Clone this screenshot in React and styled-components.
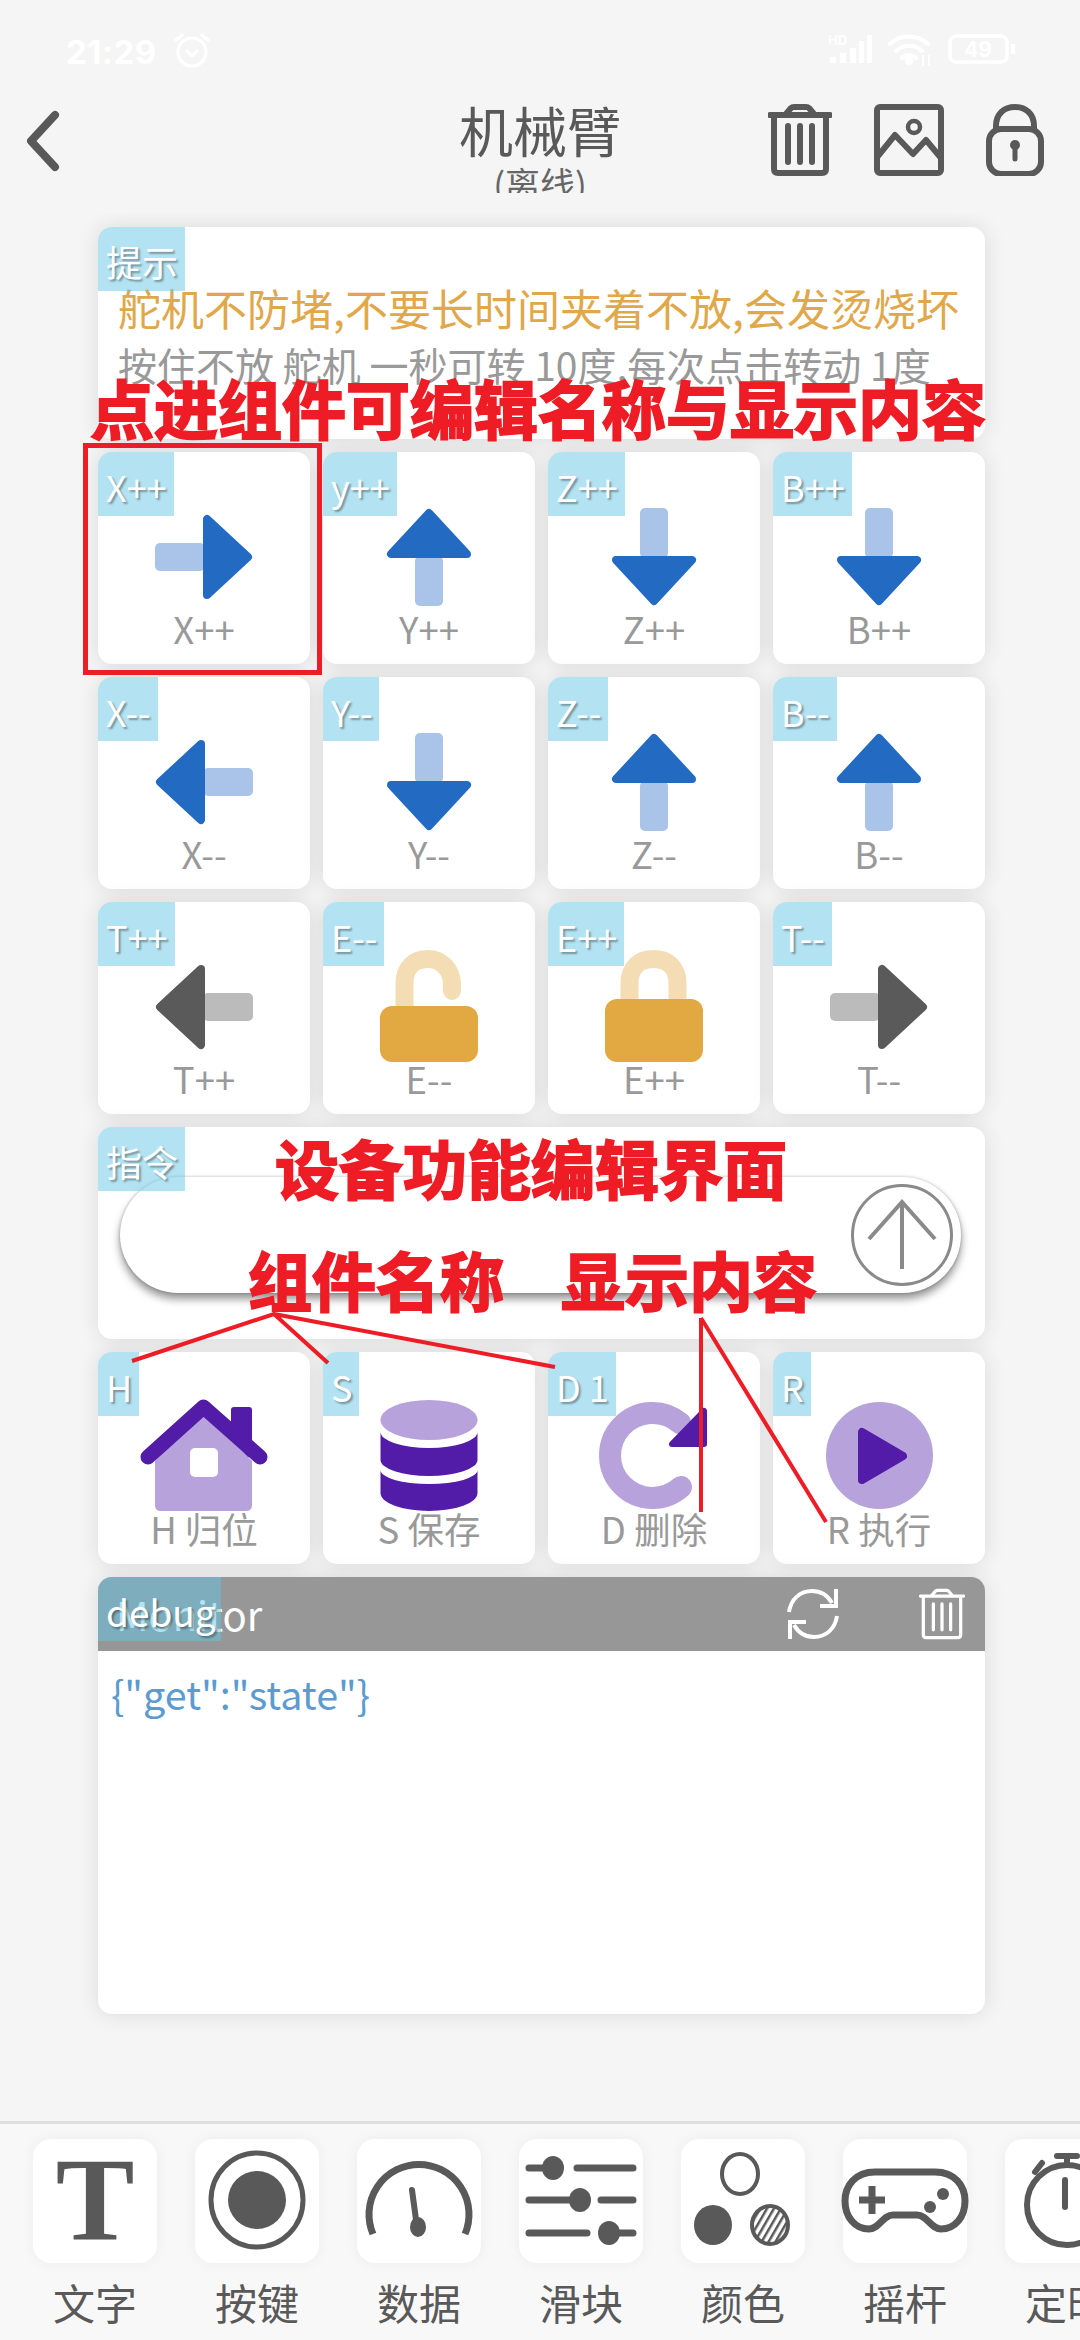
import React from 'react'
import styled, { createGlobalStyle } from 'styled-components'

const RED = '#ee1c25'
const INK = '#595959'
const CJK = '"Noto Sans CJK SC", "Noto Sans", sans-serif'

const GlobalStyle = createGlobalStyle`
  html, body { margin: 0; padding: 0; background: #f5f5f5; }
  body { font-family: ${CJK}; }
  * { box-sizing: border-box; }
`

const Page = styled.div`
  position: relative;
  width: 1080px;
  height: 2340px;
  overflow: hidden;
  display: flex;
  flex-direction: column;
  background: #f5f5f5;
`

/* status bar */
const StatusBar = styled.div`
  height: 95px;
  flex: none;
  display: flex;
  align-items: flex-start;
  padding: 32px 64px 0 66px;
  color: #fff;
`
const Clock = styled.span`
  font-family: Inter, Roboto, sans-serif;
  font-weight: 700;
  font-size: 33px;
  line-height: 40px;
  letter-spacing: 0.5px;
`
const AlarmSvg = styled.svg`
  margin: 1px 0 0 17px;
`
const StatusRight = styled.div`
  margin-left: auto;
  display: flex;
  align-items: center;
  gap: 16px;
`

/* header */
const Header = styled.header`
  height: 98px;
  flex: none;
  display: grid;
  grid-template-columns: 1fr auto 1fr;
  padding: 0 36px;
  overflow: hidden;
`
const BackBtn = styled.div`
  padding-top: 14px;
  margin-left: -12px;
`
const TitleBlock = styled.div`
  text-align: center;
  color: ${INK};
`
const Title = styled.div`
  font-size: 54px;
  line-height: 64px;
  margin-top: 3px;
`
const Subtitle = styled.div`
  font-size: 35px;
  line-height: 40px;
  margin-top: 1px;
  color: #666;
`
const HeaderIcons = styled.div`
  display: flex;
  justify-content: flex-end;
  align-items: flex-start;
  gap: 42px;
  padding-top: 9px;
`

/* scrolling work area */
const Workspace = styled.main`
  flex: 1;
  min-height: 0;
  margin-top: 20px;
  padding: 14px 95px 0 98px;
  overflow: hidden;
`
const Grid = styled.div`
  display: grid;
  grid-template-columns: repeat(4, 1fr);
  grid-auto-rows: 212px;
  column-gap: 13px;
  row-gap: 13px;
`
const Card = styled.div`
  position: relative;
  background: #fff;
  border-radius: 14px;
  box-shadow: 0 0 22px rgba(0, 0, 0, 0.11);
  overflow: hidden;
  display: flex;
  flex-direction: column;
  align-items: center;
  padding-top: 45px;
`
const WideCard = styled(Card)`
  grid-column: 1 / -1;
  align-items: stretch;
  padding-top: 0;
`
const DebugCard = styled(WideCard)`
  grid-row: span 2;
`
const Tag = styled.span`
  position: absolute;
  left: 0;
  top: 0;
  z-index: 2;
  height: 64px;
  padding: 0 ${(p) => p.$padRight || 7}px 0 8px;
  background: rgba(100, 198, 228, 0.49);
  color: #fff;
  font-size: ${(p) => p.$size || 36}px;
  line-height: 68px;
  white-space: nowrap;
  text-shadow: 2px 2px 2px rgba(0, 0, 0, 0.35);
`
const IconBox = styled.svg`
  width: 120px;
  height: 120px;
  flex: none;
  overflow: visible;
`
const CardLabel = styled.div`
  margin-top: -12px;
  color: #999;
  font-size: 36.5px;
  line-height: 48px;
  white-space: nowrap;
`

const TipBody = styled.div`
  padding: 55px 0 0 20px;
`
const TipWarn = styled.div`
  color: #e0a84a;
  font-size: 43px;
  line-height: 50px;
  white-space: nowrap;
`
const TipNote = styled.div`
  margin-top: 4px;
  color: #999;
  font-size: 39px;
  line-height: 57px;
  white-space: nowrap;
`

const CommandBody = styled.div`
  padding: 50px 24px 0 22px;
`
const CommandPill = styled.div`
  height: 116px;
  border-radius: 58px;
  background: #fff;
  box-shadow: 0 6px 8px rgba(0, 0, 0, 0.42), 0 0 3px rgba(0, 0, 0, 0.25);
  display: flex;
  justify-content: flex-end;
  align-items: center;
  padding-right: 8px;
`
const SendBtn = styled.div`
  width: 102px;
  height: 102px;
  border-radius: 50%;
  border: 3px solid #8a8a8a;
  display: flex;
  align-items: center;
  justify-content: center;
`

const DebugHead = styled.div`
  height: 74px;
  flex: none;
  background: #979797;
  color: #fff;
  display: flex;
  align-items: center;
  padding: 0 20px 0 18px;
  font-size: 40px;
`
const DebugActions = styled.div`
  margin-left: auto;
  display: flex;
  align-items: center;
  gap: 80px;
`
const DebugText = styled.div`
  padding: 17px 13px;
  color: #5b9bd0;
  font-size: 39.5px;
  line-height: 50px;
`

/* bottom palette */
const Palette = styled.footer`
  height: 219px;
  flex: none;
  border-top: 3px solid #dedede;
  background: #f8f8f8;
  display: flex;
  gap: 38px;
  padding: 15px 0 0 33px;
  overflow: hidden;
`
const PaletteItem = styled.div`
  width: 124px;
  flex: none;
  display: flex;
  flex-direction: column;
  align-items: center;
`
const PaletteTile = styled.div`
  width: 124px;
  height: 124px;
  border-radius: 18px;
  background: #fff;
  box-shadow: 0 0 14px rgba(0, 0, 0, 0.05);
  display: flex;
  align-items: center;
  justify-content: center;
`
const PaletteSvg = styled.svg`
  width: 124px;
  height: 124px;
  overflow: visible;
  flex: none;
`
const SerifT = styled.span`
  font-family: "Liberation Serif", serif;
  font-weight: 700;
  font-size: 118px;
  line-height: 124px;
  color: ${INK};
`
const PaletteLabel = styled.div`
  margin-top: 13px;
  color: ${INK};
  font-size: 42px;
  line-height: 52px;
  white-space: nowrap;
`

/* red notes painted over the screenshot */
const Note = styled.div`
  position: absolute;
  z-index: 5;
  left: ${(p) => p.$x}px;
  top: ${(p) => p.$y}px;
  color: ${RED};
  font-size: 64px;
  line-height: 70px;
  font-weight: 700;
  -webkit-text-stroke: 2px ${RED};
  white-space: nowrap;
`
const NoteBox = styled.div`
  position: absolute;
  z-index: 5;
  left: 83px;
  top: 443px;
  width: 239px;
  height: 232px;
  border: 5px solid ${RED};
`
const NoteLines = styled.svg`
  position: absolute;
  z-index: 5;
  left: 0;
  top: 0;
  pointer-events: none;
`

const Arrow = ({ turn = 0, dark = '#236ac2', light = '#a9c4e8' }) => (
  <IconBox viewBox="0 0 120 120">
    <g transform={`rotate(${turn} 60 60)`}>
      <rect x="11" y="46" width="50" height="28" rx="5" fill={light} />
      <polygon
        points="63,22 63,98 104,60"
        fill={dark}
        stroke={dark}
        strokeWidth="8"
        strokeLinejoin="round"
      />
    </g>
  </IconBox>
)

const Padlock = ({ open }) => (
  <IconBox viewBox="0 0 120 120">
    {open ? (
      <path d="M35.500 62V36C35.500 20 46 12 59 12S83 22 83 38V44" fill="none" stroke="#f4dcb4" strokeWidth="18" strokeLinecap="round" />
    ) : (
      <path d="M35.500 56V36C35.500 20 46 12 59.500 12S83.500 20 83.500 36V56" fill="none" stroke="#f4dcb4" strokeWidth="18" />
    )}
    <rect x="11" y={open ? 59 : 52} width="98" height={open ? 56 : 63} rx="12" fill="#e2a842" />
  </IconBox>
)

const HomeIcon = () => (
  <IconBox viewBox="0 0 120 120">
    <rect x="87" y="10" width="21" height="50" rx="3" fill="#521ba8" />
    <path d="M60 14L108 64V108Q108 114 102 114H17Q11 114 11 108V64Z" fill="#b8a2dc" />
    <rect x="46" y="51" width="28" height="29" rx="5" fill="#fff" />
    <path d="M4 60L59.500 10L116 60" fill="none" stroke="#521ba8" strokeWidth="15" strokeLinecap="round" strokeLinejoin="round" />
  </IconBox>
)

const DatabaseIcon = () => (
  <IconBox viewBox="0 0 120 120">
    <ellipse cx="60" cy="23" rx="48.500" ry="20" fill="#b8a2dc" />
    <path d="M11.500 35A48.500 16 0 0 0 108.500 35V63A48.500 16 0 0 1 11.500 63Z" fill="#521ba8" />
    <path d="M11.500 73A48.500 14 0 0 0 108.500 73V96A48.500 18 0 0 1 11.500 96Z" fill="#521ba8" />
  </IconBox>
)

const ResetIcon = () => (
  <IconBox viewBox="0 0 120 120">
    <path d="M86 26A42.500 42.500 0 1 0 87 90" fill="none" stroke="#b8a2dc" strokeWidth="22" strokeLinecap="round" />
    <polygon points="110,14 110,47 78,47" fill="#521ba8" stroke="#521ba8" strokeWidth="6" strokeLinejoin="round" />
  </IconBox>
)

const PlayIcon = () => (
  <IconBox viewBox="0 0 120 120">
    <circle cx="60.500" cy="58.500" r="53.500" fill="#b8a2dc" />
    <polygon points="43,35 43,83 84,59" fill="#521ba8" stroke="#521ba8" strokeWidth="8" strokeLinejoin="round" />
  </IconBox>
)

const TrashIcon = ({ color = INK, width = 64, height = 72, sw = 6 }) => (
  <svg width={width} height={height} viewBox="0 0 64 72" fill="none" stroke={color} strokeWidth={sw} strokeLinecap="round" strokeLinejoin="round">
    <path d="M2 11H62" />
    <path d="M18 10L23 4Q24 3 26 3H38Q40 3 41 4L46 10" />
    <path d="M6 12V65Q6 69 10 69H54Q58 69 58 65V12" />
    <path d="M20 22V58M32 22V58M44 22V58" />
  </svg>
)

const ImageIcon = () => (
  <svg width="70" height="72" viewBox="0 0 70 72" fill="none" stroke={INK} strokeWidth="6" strokeLinejoin="round" strokeLinecap="round">
    <rect x="3" y="3" width="64" height="66" rx="3" />
    <circle cx="40" cy="23" r="6" strokeWidth="4.500" />
    <path d="M4 52L21 31L39 50L52 36L67 54" />
  </svg>
)

const LockIcon = () => (
  <svg width="58" height="72" viewBox="0 0 58 72" fill="none" stroke={INK} strokeWidth="6">
    <path d="M10 26V22C10 10 18 3 29 3S48 10 48 22V26" />
    <rect x="3" y="25" width="52" height="45" rx="12" />
    <circle cx="29" cy="41" r="5" fill={INK} stroke="none" />
    <path d="M29 42V55" strokeLinecap="round" strokeWidth="5" />
  </svg>
)

const RefreshIcon = () => (
  <svg width="52" height="52" viewBox="0 0 52 52" fill="none" stroke="#fff" strokeWidth="4" strokeLinejoin="miter">
    <path d="M2 24C4 11 13 3 25 3C34 3 41 8 45 15" />
    <path d="M50 28C48 41 39 49 27 49C18 49 11 44 7 37" />
    <path d="M49 1V18H33" />
    <path d="M3 51V34H19" />
  </svg>
)

const GaugeIcon = () => (
  <PaletteSvg viewBox="0 0 124 124" fill="none" stroke={INK}>
    <path d="M16 95A50 50 0 1 1 108 95" strokeWidth="7" />
    <path d="M55 51L60 88" strokeWidth="6" strokeLinecap="round" />
    <ellipse cx="61" cy="88" rx="8" ry="10" fill={INK} stroke="none" />
  </PaletteSvg>
)

const SliderIcon = () => (
  <PaletteSvg viewBox="0 0 124 124" fill={INK} stroke={INK} strokeWidth="7" strokeLinecap="round">
    <path d="M10 29H30M58 29H114M10 61H52M82 61H114M10 94H68M100 94H114" fill="none" />
    <ellipse cx="34" cy="29" rx="11" ry="12" stroke="none" />
    <ellipse cx="61" cy="61" rx="11" ry="12" stroke="none" />
    <ellipse cx="90" cy="94" rx="11" ry="12" stroke="none" />
  </PaletteSvg>
)

const ColorIcon = () => (
  <PaletteSvg viewBox="0 0 124 124">
    <defs>
      <pattern id="hatch" width="6" height="6" patternUnits="userSpaceOnUse" patternTransform="rotate(30)">
        <rect width="2.500" height="6" fill={INK} />
      </pattern>
    </defs>
    <ellipse cx="59" cy="35" rx="18" ry="20" fill="none" stroke={INK} strokeWidth="4" />
    <ellipse cx="32" cy="86" rx="19" ry="20" fill={INK} />
    <ellipse cx="89" cy="86" rx="18" ry="19" fill="url(#hatch)" stroke={INK} strokeWidth="4" />
  </PaletteSvg>
)

const PadIcon = () => (
  <PaletteSvg viewBox="0 0 124 124" fill="none" stroke={INK}>
    <path d="M32 33H92C112 33 122 47 122 62C122 78 112 90 98 90C88 90 84 76 74 76H50C40 76 36 90 26 90C12 90 2 78 2 62C2 47 12 33 32 33Z" strokeWidth="7" />
    <path d="M29 47V75M16 61H42" strokeWidth="7" />
    <circle cx="100" cy="55" r="6" fill={INK} stroke="none" />
    <circle cx="87" cy="68" r="6" fill={INK} stroke="none" />
  </PaletteSvg>
)

const TimerIcon = () => (
  <PaletteSvg viewBox="0 0 124 124" fill="none" stroke={INK}>
    <circle cx="62" cy="66" r="40" strokeWidth="6" />
    <path d="M52 17H72M62 17V26M30 33L37 24M60 41V68" strokeWidth="6" strokeLinecap="round" />
  </PaletteSvg>
)

const padCards = [
  { tag: 'X++', label: 'X++', icon: <Arrow /> },
  { tag: 'y++', label: 'Y++', icon: <Arrow turn={-90} /> },
  { tag: 'Z++', label: 'Z++', icon: <Arrow turn={90} /> },
  { tag: 'B++', label: 'B++', icon: <Arrow turn={90} /> },
  { tag: 'X--', label: 'X--', icon: <Arrow turn={180} /> },
  { tag: 'Y--', label: 'Y--', icon: <Arrow turn={90} /> },
  { tag: 'Z--', label: 'Z--', icon: <Arrow turn={-90} /> },
  { tag: 'B--', label: 'B--', icon: <Arrow turn={-90} /> },
  { tag: 'T++', label: 'T++', icon: <Arrow turn={180} dark="#5a5a5a" light="#bbb" /> },
  { tag: 'E--', label: 'E--', icon: <Padlock open /> },
  { tag: 'E++', label: 'E++', icon: <Padlock /> },
  { tag: 'T--', label: 'T--', icon: <Arrow dark="#5a5a5a" light="#bbb" /> },
]

const actionCards = [
  { tag: 'H', label: 'H 归位', icon: <HomeIcon /> },
  { tag: 'S', label: 'S 保存', icon: <DatabaseIcon /> },
  { tag: 'D 1', label: 'D 删除', icon: <ResetIcon /> },
  { tag: 'R', label: 'R 执行', icon: <PlayIcon /> },
]

const paletteItems = [
  { label: '文字', icon: <SerifT>T</SerifT> },
  {
    label: '按键',
    icon: (
      <PaletteSvg viewBox="0 0 124 124">
        <ellipse cx="62" cy="61" rx="46" ry="47" fill="none" stroke={INK} strokeWidth="5" />
        <ellipse cx="62" cy="61" rx="29" ry="29" fill={INK} />
      </PaletteSvg>
    ),
  },
  { label: '数据', icon: <GaugeIcon /> },
  { label: '滑块', icon: <SliderIcon /> },
  { label: '颜色', icon: <ColorIcon /> },
  { label: '摇杆', icon: <PadIcon /> },
  { label: '定时', icon: <TimerIcon /> },
]

const ControlCard = ({ tag, label, icon }) => (
  <Card>
    <Tag>{tag}</Tag>
    {icon}
    <CardLabel>{label}</CardLabel>
  </Card>
)

const App = () => (
  <Page>
    <GlobalStyle />

    <StatusBar>
      <Clock>21:29</Clock>
      <AlarmSvg width="36" height="36" viewBox="0 0 36 36" fill="none" stroke="#fff" strokeWidth="3" strokeLinecap="round" strokeLinejoin="round">
        <circle cx="18" cy="19" r="14" />
        <path d="M13 18L18 23L23 18M2 7L8 2M34 7L28 2" />
      </AlarmSvg>
      <StatusRight>
        <svg width="44" height="32" viewBox="0 0 44 32" fill="#fff">
          <text x="0" y="12" fontFamily="Inter, sans-serif" fontWeight="700" fontSize="13">HD</text>
          <rect x="2" y="24" width="6" height="6" />
          <rect x="12" y="20" width="6" height="10" />
          <rect x="22" y="15" width="6" height="15" />
          <rect x="31" y="8" width="5" height="22" />
          <rect x="39" y="2" width="5" height="28" />
        </svg>
        <svg width="44" height="34" viewBox="0 0 44 34" fill="none" stroke="#fff" strokeWidth="4" strokeLinecap="round">
          <path d="M2 12C12 2 30 2 40 12M8 19C15 12 27 12 34 19M14 26C18 22 24 22 28 26" />
          <circle cx="21" cy="29" r="2" fill="#fff" />
          <path d="M35 24V33M41 24V33" strokeWidth="2" />
        </svg>
        <svg width="68" height="30" viewBox="0 0 68 30" fill="none" stroke="#fff" strokeWidth="3.500">
          <rect x="2" y="2" width="57" height="26" rx="6" />
          <path d="M65 10V20" strokeWidth="4" />
          <text x="30" y="23" textAnchor="middle" fill="#fff" stroke="none" fontFamily="Inter, sans-serif" fontWeight="700" fontSize="21">49</text>
        </svg>
      </StatusRight>
    </StatusBar>

    <Header>
      <BackBtn>
        <svg width="40" height="64" viewBox="0 0 40 64" fill="none" stroke={INK} strokeWidth="8" strokeLinecap="round" strokeLinejoin="round">
          <path d="M31 6L7 32L31 58" />
        </svg>
      </BackBtn>
      <TitleBlock>
        <Title>机械臂</Title>
        <Subtitle>(离线)</Subtitle>
      </TitleBlock>
      <HeaderIcons>
        <TrashIcon />
        <ImageIcon />
        <LockIcon />
      </HeaderIcons>
    </Header>

    <Workspace>
      <Grid>
        <WideCard>
          <Tag>提示</Tag>
          <TipBody>
            <TipWarn>舵机不防堵,不要长时间夹着不放,会发烫烧坏</TipWarn>
            <TipNote>按住不放 舵机 一秒可转 10度,每次点击转动 1度</TipNote>
          </TipBody>
        </WideCard>

        {padCards.map((card) => (
          <ControlCard key={card.tag} {...card} />
        ))}

        <WideCard>
          <Tag>指令</Tag>
          <CommandBody>
            <CommandPill>
              <SendBtn>
                <svg width="72" height="72" viewBox="0 0 72 72" fill="none" stroke="#8a8a8a" strokeWidth="4">
                  <path d="M36 3V70M3 40L36 3L69 40" />
                </svg>
              </SendBtn>
            </CommandPill>
          </CommandBody>
        </WideCard>

        {actionCards.map((card) => (
          <ControlCard key={card.tag} {...card} />
        ))}

        <DebugCard>
          <Tag $size={37} $padRight={5}>debug</Tag>
          <DebugHead>
            Monitor
            <DebugActions>
              <RefreshIcon />
              <TrashIcon color="#fff" width={46} height={54} sw={4.500} />
            </DebugActions>
          </DebugHead>
          <DebugText>{'{"get":"state"}'}</DebugText>
        </DebugCard>
      </Grid>
    </Workspace>

    <Palette>
      {paletteItems.map((item) => (
        <PaletteItem key={item.label}>
          <PaletteTile>{item.icon}</PaletteTile>
          <PaletteLabel>{item.label}</PaletteLabel>
        </PaletteItem>
      ))}
    </Palette>

    <NoteBox />
    <Note $x={90} $y={371}>点进组件可编辑名称与显示内容</Note>
    <Note $x={275} $y={1131}>设备功能编辑界面</Note>
    <Note $x={248} $y={1243}>组件名称</Note>
    <Note $x={561} $y={1243}>显示内容</Note>
    <NoteLines width="1080" height="2340" viewBox="0 0 1080 2340" fill="none" stroke={RED} strokeWidth="4">
      <path d="M132 1361L274 1314L328 1363M274 1314L555 1367" />
      <path d="M701 1318V1512M701 1318L826 1522" />
    </NoteLines>
  </Page>
)

export default App
